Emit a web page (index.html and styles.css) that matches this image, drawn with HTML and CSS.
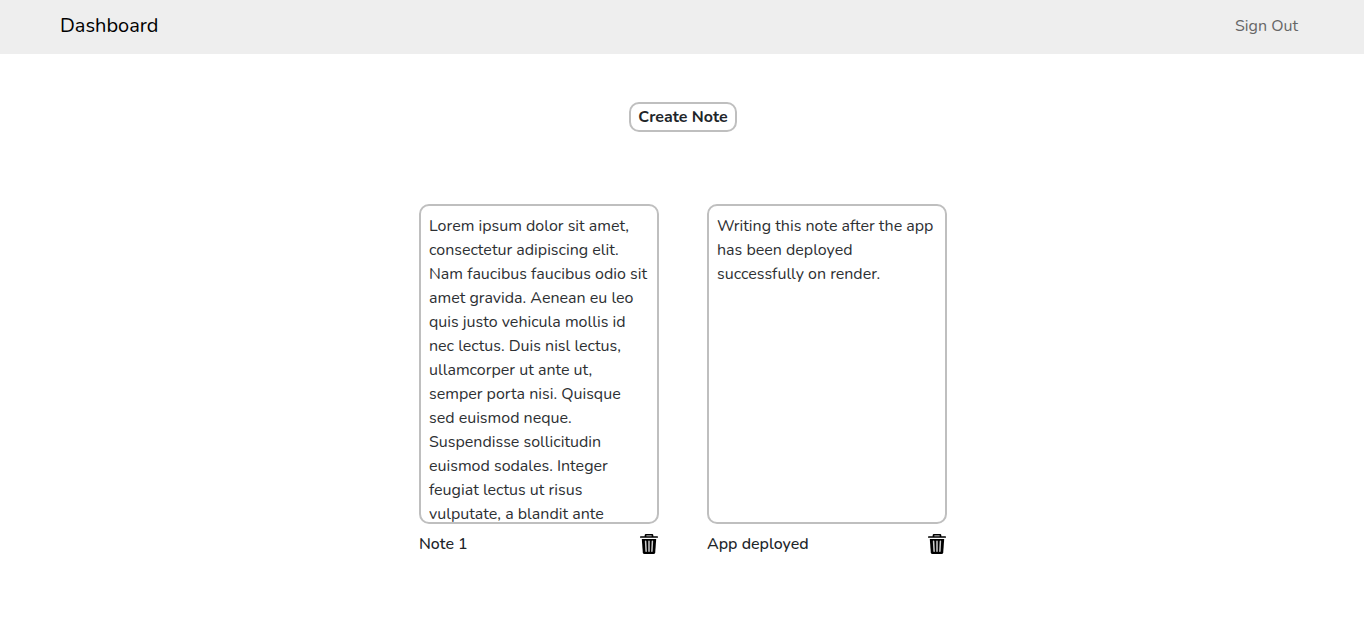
FILE: index.html
```html
<!DOCTYPE html>
<html lang="en">
<head>
<meta charset="utf-8">
<title>Dashboard</title>
<link rel="stylesheet" href="styles.css">
</head>
<body>
<header class="navbar">
  <a class="brand" href="#">Dashboard</a>
  <a class="signout" href="#">Sign Out</a>
</header>
<main class="content">
  <button class="create" type="button">Create Note</button>
  <section class="notes">
    <article class="note">
      <div class="note-body">Lorem ipsum dolor sit amet, consectetur adipiscing elit. Nam faucibus faucibus odio sit amet gravida. Aenean eu leo quis justo vehicula mollis id nec lectus. Duis nisl lectus, ullamcorper ut ante ut, semper porta nisi. Quisque sed euismod neque. Suspendisse sollicitudin euismod sodales. Integer feugiat lectus ut risus vulputate, a blandit ante</div>
      <div class="note-footer">
        <span class="note-title">Note 1</span>
        <button class="delete" type="button" aria-label="Delete Note 1">
          <svg class="icon" viewBox="0 0 20 20"><path class="lid" d="M1.800 3h16.400M6.500 3V1.500q0-.8.800-.8h5.400q.8 0 .8.800V3"/><path class="can" d="M2.800 5h14.400l-1 13.500Q16 20 14.600 20H5.400q-1.400 0-1.600-1.500z"/><path class="slots" d="M6.600 7.300l.5 10M10 7.300v10M13.400 7.300l-.5 10"/></svg>
        </button>
      </div>
    </article>
    <article class="note">
      <div class="note-body">Writing this note after the app has been deployed successfully on render.</div>
      <div class="note-footer">
        <span class="note-title">App deployed</span>
        <button class="delete" type="button" aria-label="Delete App deployed">
          <svg class="icon" viewBox="0 0 20 20"><path class="lid" d="M1.800 3h16.400M6.500 3V1.500q0-.8.800-.8h5.400q.8 0 .8.800V3"/><path class="can" d="M2.800 5h14.400l-1 13.500Q16 20 14.600 20H5.400q-1.400 0-1.600-1.500z"/><path class="slots" d="M6.600 7.300l.5 10M10 7.300v10M13.400 7.300l-.5 10"/></svg>
        </button>
      </div>
    </article>
  </section>
</main>
</body>
</html>
```
FILE: styles.css
```css
* { box-sizing: border-box; }
body {
  margin: 0;
  font: 16px/24px Nunito, "Open Sans", sans-serif;
  color: #2d3033;
  background: #fff;
}
.navbar {
  display: flex;
  justify-content: space-between;
  align-items: center;
  padding: 11px 66px 13px 60px;
  background: #eee;
}
.brand { font-size: 20px; line-height: 30px; color: #000; text-decoration: none; }
.signout { color: #666; text-decoration: none; }
.content {
  display: flex;
  flex-direction: column;
  align-items: center;
  gap: 72px;
  padding: 48px 24px 48px 26px;
}
.create {
  padding: 1px 7px;
  border: 2px solid #bfbfbf;
  border-radius: 10px;
  background: #fff;
  color: #212529;
  font: inherit;
  font-weight: 700;
}
.notes { display: flex; flex-wrap: wrap; justify-content: center; gap: 48px; }
.note { width: 240px; }
.note-body {
  height: 320px;
  padding: 8px;
  overflow: hidden;
  border: 2px solid #bfbfbf;
  border-radius: 10px;
}
.note-footer { display: flex; justify-content: space-between; align-items: center; padding-top: 8px; }
.note-title { font-weight: 500; color: #212529; }
.delete { display: flex; padding: 0; border: 0; background: none; }
.icon { width: 20px; height: 20px; }
.lid { fill: none; stroke: #000; stroke-width: 1.7; stroke-linecap: round; }
.can { fill: #000; }
.slots { fill: none; stroke: #ccc; stroke-width: 1.5; stroke-linecap: round; }
```
